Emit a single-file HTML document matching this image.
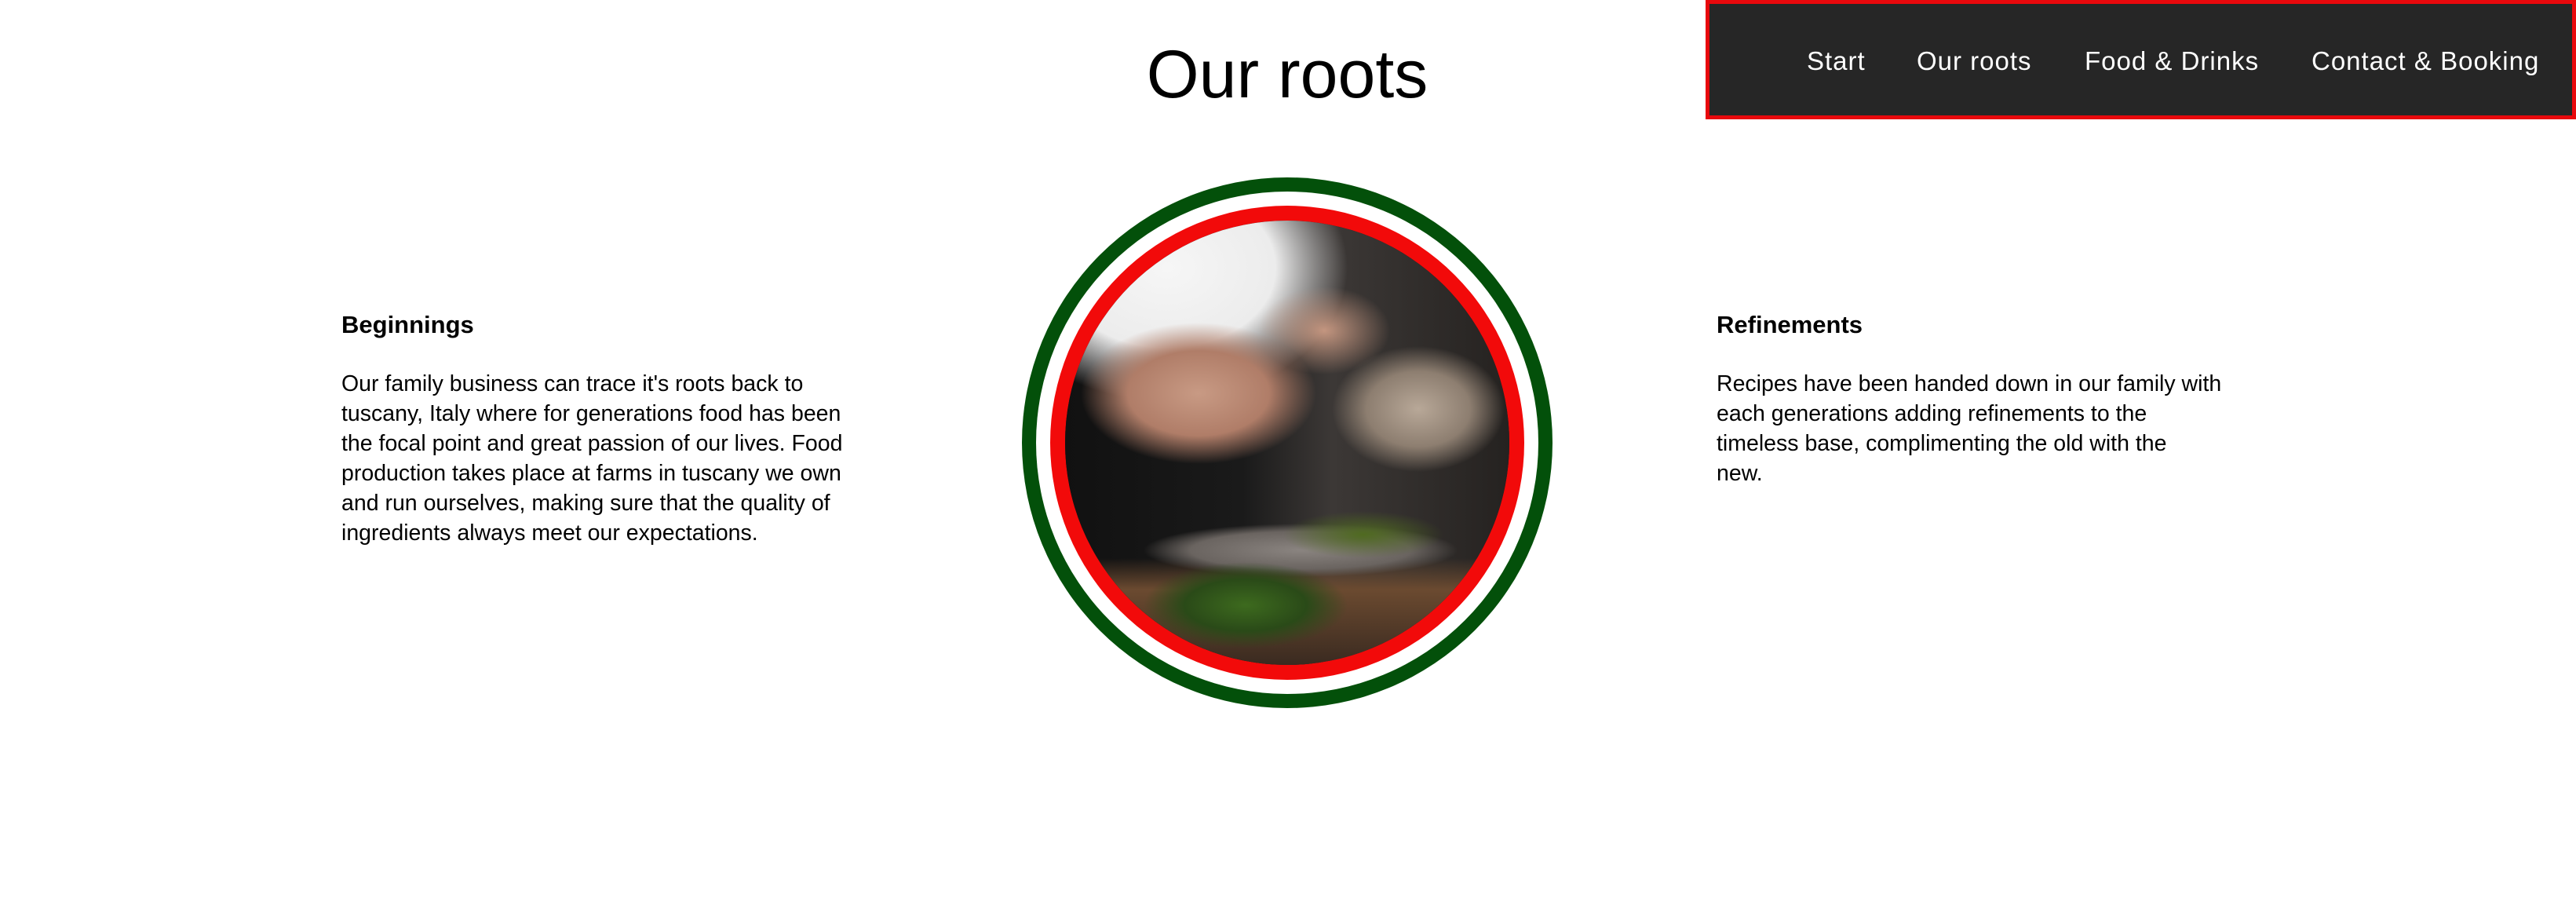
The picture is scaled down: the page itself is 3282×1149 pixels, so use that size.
<!DOCTYPE html>
<html><head><meta charset="utf-8"><style>
body{margin:0;width:3282px;height:1149px;background:#fff;position:relative;overflow:hidden;font-family:"Liberation Sans",sans-serif;color:#000}
h1{position:absolute;left:1420px;width:440px;top:40px;margin:0;text-align:center;font-size:86px;font-weight:normal;line-height:110px}
nav{position:absolute;left:2173px;top:0;height:152px;box-sizing:border-box;background:#262626;border:5px solid #e8080c;width:1109px}
nav a{position:absolute;top:54px;color:#fff;font-size:33px;letter-spacing:1px;text-decoration:none;white-space:nowrap}
.col{position:absolute;width:720px}
.col h3{margin:0;font-size:31px;font-weight:bold;line-height:40px}
.col p{margin:36px 0 0;font-size:28.5px;line-height:38px;white-space:nowrap}
.ring{position:absolute;border-radius:50%}
</style></head><body>
<h1>Our roots</h1>
<nav>
<a style="left:124px">Start</a>
<a style="left:264px">Our roots</a>
<a style="left:478px">Food &amp; Drinks</a>
<a style="left:767px">Contact &amp; Booking</a>
</nav>
<div class="col" style="left:435px;top:394px"><h3>Beginnings</h3><p>Our family business can trace it's roots back to<br>tuscany, Italy where for generations food has been<br>the focal point and great passion of our lives. Food<br>production takes place at farms in tuscany we own<br>and run ourselves, making sure that the quality of<br>ingredients always meet our expectations.</p></div>
<div class="col" style="left:2187px;top:394px"><h3>Refinements</h3><p>Recipes have been handed down in our family with<br>each generations adding refinements to the<br>timeless base, complimenting the old with the<br>new.</p></div>
<div class="ring" style="left:1302px;top:226px;width:676px;height:676px;background:#03500a"></div>
<div class="ring" style="left:1320px;top:244px;width:640px;height:640px;background:#fff"></div>
<div class="ring" style="left:1338px;top:262px;width:604px;height:604px;background:#f20a0a"></div>
<div class="ring" style="left:1357px;top:281px;width:566px;height:566px;overflow:hidden;background:#1a1514">
<div style="position:absolute;left:0;top:0;width:566px;height:566px;background:
radial-gradient(ellipse 110px 80px at 450px 240px,#b8a898 0%,#8d7e70 60%,transparent 100%),
radial-gradient(ellipse 130px 55px at 230px 490px,#3d6a1e 0%,#2a4a18 60%,transparent 100%),
radial-gradient(ellipse 170px 50px at 380px 400px,#4f6a20 0%,transparent 60%),
radial-gradient(ellipse 200px 34px at 300px 420px,#8a8480 0%,#6a6460 70%,transparent 100%),
radial-gradient(ellipse 150px 90px at 170px 220px,#c89a84 0%,#b07d68 60%,transparent 100%),
radial-gradient(ellipse 120px 80px at 330px 140px,#c49680 0%,transparent 70%),
radial-gradient(ellipse 230px 170px at 130px 60px,#f6f6f6 0%,#ececec 60%,transparent 100%),
linear-gradient(180deg,transparent 0,transparent 430px,#6b4a30 470px,#3a2a20 566px),
linear-gradient(90deg,#111 0,#1a1a1a 40%,#3c3836 60%,#252220 100%)"></div>
</div>
</body></html>
